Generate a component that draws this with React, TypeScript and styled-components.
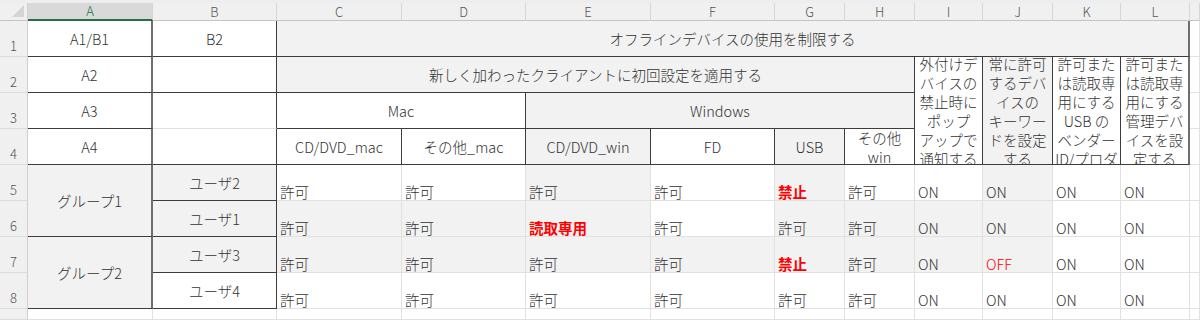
import React from "react";
import styled, { createGlobalStyle } from "styled-components";

const GlobalStyle = createGlobalStyle`
  html, body {
    margin: 0;
    padding: 0;
    background: #fff;
  }
  body {
    width: 1200px;
    height: 320px;
    overflow: hidden;
    font-family: "Noto Sans CJK JP", "Noto Sans", sans-serif;
    font-weight: 300;
  }
`;

const COLS = [28, 125, 124, 125, 124, 125, 124, 70, 70, 68, 70, 68, 69, 10];
const LETTERS = ["A", "B", "C", "D", "E", "F", "G", "H", "I", "J", "K", "L", ""];

type Edge = "grid" | "dark" | "thick";

const edge = (e: Edge = "grid") =>
  e === "dark" ? "1px solid #3c3c3c" : e === "thick" ? "2px solid #6e6e6e" : "1px solid #e1e1e1";

const TopStrip = styled.div`
  height: 3px;
  background: #eceef1;
`;

const Sheet = styled.div`
  display: grid;
  grid-template-columns: ${COLS.map((w) => `${w}px`).join(" ")};
  grid-template-rows: 18px repeat(8, 36px) 11px;
`;

const Corner = styled.div`
  position: relative;
  box-sizing: border-box;
  background: #f0f0f0;
  border-right: 1px solid #d0d0d0;
  border-bottom: 1px solid #c4c4c4;
  &::after {
    content: "";
    position: absolute;
    right: 3px;
    bottom: 3px;
    border-left: 12px solid transparent;
    border-bottom: 12px solid #d5d5d5;
  }
`;

const ColHead = styled.div<{ $active?: boolean }>`
  box-sizing: border-box;
  display: flex;
  align-items: center;
  justify-content: center;
  font-size: 13px;
  line-height: 16px;
  color: ${(p) => (p.$active ? "#217346" : "#555")};
  background: ${(p) => (p.$active ? "#d9d9d9" : "#f0f0f0")};
  border-right: 1px solid #d6d6d6;
  border-bottom: ${(p) => (p.$active ? "2px solid #217346" : "1px solid #c4c4c4")};
`;

const RowHead = styled.div<{ $row: number }>`
  grid-column: 1;
  grid-row: ${(p) => p.$row};
  box-sizing: border-box;
  display: flex;
  align-items: flex-end;
  justify-content: center;
  padding-bottom: 2px;
  font-size: 13px;
  line-height: 16px;
  color: #555;
  background: #f0f0f0;
  border-right: 1px solid #d0d0d0;
  border-bottom: 1px solid #dcdcdc;
`;

const Cell = styled.div<{
  $c: number;
  $r: number;
  $cs?: number;
  $rs?: number;
  $gray?: boolean;
  $right?: Edge;
  $bottom?: Edge;
}>`
  grid-column: ${(p) => p.$c} / span ${(p) => p.$cs ?? 1};
  grid-row: ${(p) => p.$r} / span ${(p) => p.$rs ?? 1};
  box-sizing: border-box;
  min-width: 0;
  overflow: hidden;
  display: flex;
  background: ${(p) => (p.$gray ? "#f2f2f2" : "#fff")};
  border-right: ${(p) => edge(p.$right)};
  border-bottom: ${(p) => edge(p.$bottom)};
  font-size: 14.5px;
  color: #333;
  white-space: nowrap;
`;

const Label = styled(Cell)`
  flex-direction: column;
  align-items: center;
  justify-content: center;
  text-align: center;
  line-height: 19px;
`;

const Value = styled(Cell)<{ $red?: boolean; $bold?: boolean }>`
  align-items: flex-end;
  padding: 0 3px;
  line-height: 16px;
  color: ${(p) => (p.$red ? "#ff0000" : "#333")};
  font-weight: ${(p) => (p.$bold ? 700 : 300)};
`;

const Line = styled.span`
  display: block;
`;

type Val = { t: string; red?: boolean; bold?: boolean; gray?: boolean };

const v = (t: string, gray = false, red = false, bold = false): Val => ({ t, gray, red, bold });

const DATA: Val[][] = [
  [v("許可"), v("許可"), v("許可", true), v("許可"), v("禁止", true, true, true), v("許可"), v("ON"), v("ON", true), v("ON"), v("ON")],
  [v("許可", true), v("許可", true), v("読取専用", true, true, true), v("許可"), v("許可", true), v("許可", true), v("ON", true), v("ON", true), v("ON"), v("ON")],
  [v("許可", true), v("許可", true), v("許可", true), v("許可", true), v("禁止", true, true, true), v("許可", true), v("ON", true), v("OFF", true, true), v("ON"), v("ON")],
  [v("許可"), v("許可"), v("許可"), v("許可"), v("許可"), v("許可"), v("ON"), v("ON"), v("ON"), v("ON")],
];

const USERS = [
  { name: "ユーザ2", gray: true },
  { name: "ユーザ1", gray: true },
  { name: "ユーザ3", gray: true },
  { name: "ユーザ4", gray: false },
];

const WRAPPED = [
  { lines: ["外付けデ", "バイスの", "禁止時に", "ポップ", "アップで", "通知する"], gray: false },
  { lines: ["常に許可", "するデバ", "イスの", "キーワー", "ドを設定", "する"], gray: true },
  { lines: ["許可また", "は読取専", "用にする", "USB の", "ベンダー", "ID/プロダ"], gray: false },
  { lines: ["許可また", "は読取専", "用にする", "管理デバ", "イスを設", "定する"], gray: false },
];

export default function App() {
  return (
    <>
      <GlobalStyle />
      <TopStrip />
      <Sheet>
        <Corner />
        {LETTERS.map((l, i) => (
          <ColHead key={`h${i}`} $active={l === "A"}>
            {l}
          </ColHead>
        ))}

        {[1, 2, 3, 4, 5, 6, 7, 8, 9].map((n) => (
          <RowHead key={`r${n}`} $row={n + 1}>
            {n < 9 ? n : ""}
          </RowHead>
        ))}

        {/* row 1 */}
        <Label $c={2} $r={2} $right="thick" $bottom="dark">A1/B1</Label>
        <Label $c={3} $r={2} $right="dark" $bottom="dark">B2</Label>
        <Label $c={4} $r={2} $cs={10} $gray $right="thick" $bottom="dark">
          オフラインデバイスの使用を制限する
        </Label>
        <Cell $c={14} $r={2} />

        {/* row 2 */}
        <Label $c={2} $r={3} $right="thick" $bottom="dark">A2</Label>
        <Label $c={3} $r={3} $right="dark" $bottom="dark" />
        <Label $c={4} $r={3} $cs={6} $gray $right="dark" $bottom="dark">
          新しく加わったクライアントに初回設定を適用する
        </Label>
        {WRAPPED.map((w, i) => (
          <Label key={`w${i}`} $c={10 + i} $r={3} $rs={3} $gray={w.gray} $right={i === 3 ? "thick" : "dark"} $bottom="dark">
            {w.lines.map((line, j) => (
              <Line key={j}>{line}</Line>
            ))}
          </Label>
        ))}
        <Cell $c={14} $r={3} />

        {/* row 3 */}
        <Label $c={2} $r={4} $right="thick" $bottom="dark">A3</Label>
        <Label $c={3} $r={4} $right="dark" />
        <Label $c={4} $r={4} $cs={2} $right="dark" $bottom="dark">Mac</Label>
        <Label $c={6} $r={4} $cs={4} $gray $right="dark" $bottom="dark">Windows</Label>
        <Cell $c={14} $r={4} />

        {/* row 4 */}
        <Label $c={2} $r={5} $right="thick" $bottom="dark">A4</Label>
        <Label $c={3} $r={5} $right="dark" $bottom="dark" />
        <Label $c={4} $r={5} $right="dark" $bottom="dark">CD/DVD_mac</Label>
        <Label $c={5} $r={5} $right="dark" $bottom="dark">その他_mac</Label>
        <Label $c={6} $r={5} $gray $right="dark" $bottom="dark">CD/DVD_win</Label>
        <Label $c={7} $r={5} $right="dark" $bottom="dark">FD</Label>
        <Label $c={8} $r={5} $gray $right="dark" $bottom="dark">USB</Label>
        <Label $c={9} $r={5} $right="dark" $bottom="dark">
          <Line>その他</Line>
          <Line>win</Line>
        </Label>
        <Cell $c={14} $r={5} />

        {/* rows 5-8 */}
        <Label $c={2} $r={6} $rs={2} $gray $right="thick" $bottom="dark">グループ1</Label>
        <Label $c={2} $r={8} $rs={2} $gray $right="thick" $bottom="dark">グループ2</Label>
        {USERS.map((u, i) => (
          <Label key={`u${i}`} $c={3} $r={6 + i} $gray={u.gray} $right="dark" $bottom="dark">
            {u.name}
          </Label>
        ))}
        {DATA.map((row, i) =>
          row.map((d, j) => (
            <Value key={`d${i}-${j}`} $c={4 + j} $r={6 + i} $gray={d.gray} $red={d.red} $bold={d.bold}>
              {d.t}
            </Value>
          ))
        )}
        {DATA.map((_, i) => (
          <Cell key={`m${i}`} $c={14} $r={6 + i} />
        ))}

        {/* row 9 */}
        {COLS.slice(1).map((_, i) => (
          <Cell key={`e${i}`} $c={2 + i} $r={10} />
        ))}
      </Sheet>
    </>
  );
}
